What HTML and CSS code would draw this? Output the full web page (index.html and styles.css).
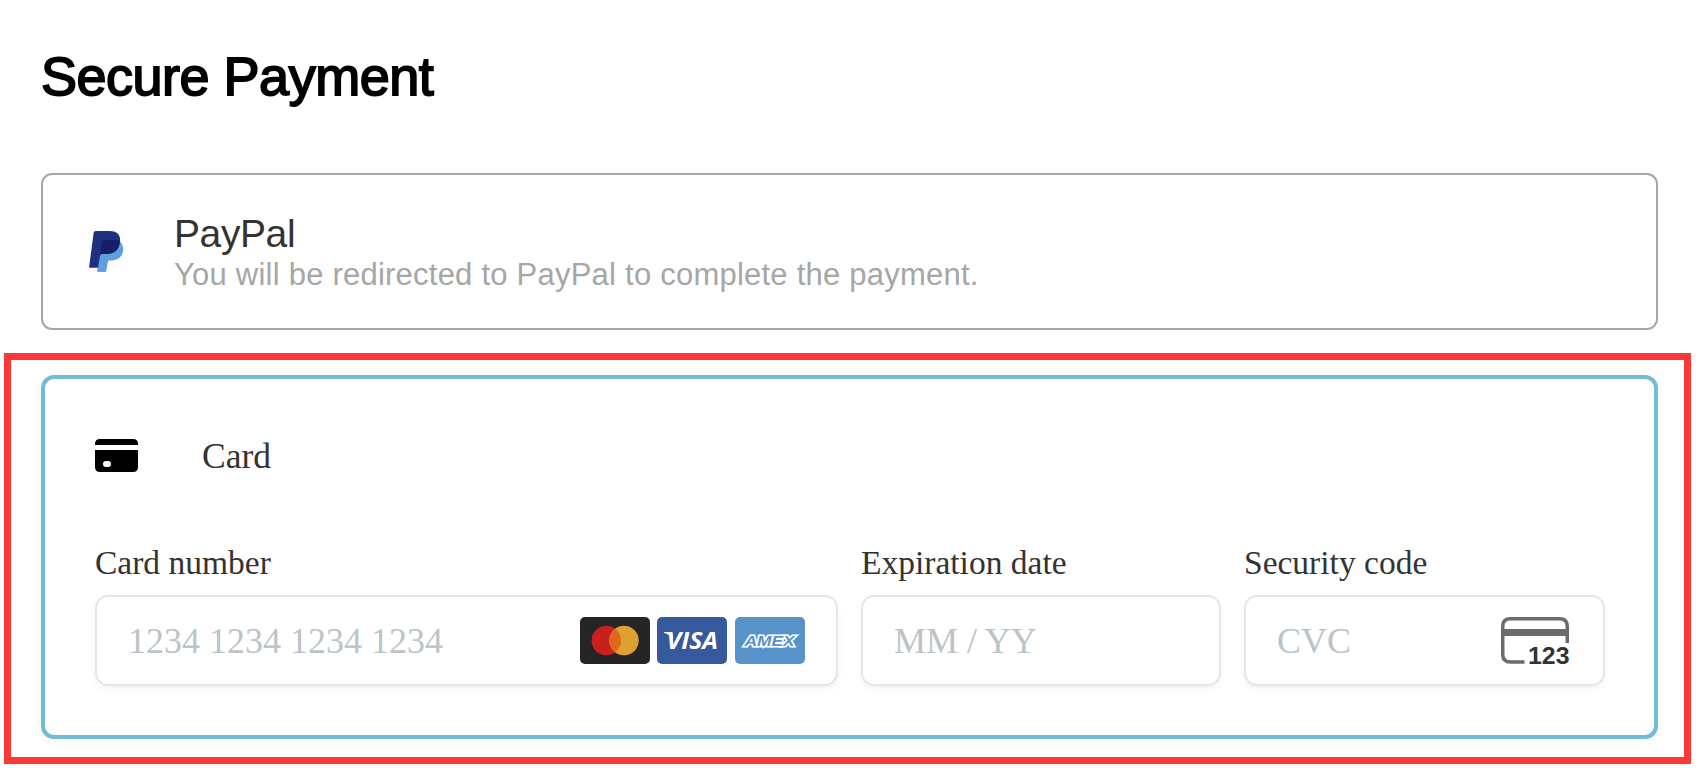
FILE: index.html
```html
<!DOCTYPE html>
<html lang="en">
<head>
  <meta charset="UTF-8">
  <meta name="viewport" content="width=device-width, initial-scale=1.0">
  <title>Secure Payment</title>
  <link rel="stylesheet" href="styles.css">
</head>
<body>
<div class="container">
  <h1>Secure Payment</h1>

  <!-- PayPal option -->
  <div class="paypal">
    <svg class="paypal-logo" width="35" height="42" viewBox="0 0 35 42">
      <path fill="#5f9fdf" d="M12 11H31.500C34 14 35 18 33.500 22C31.800 27 28 29.500 22 29.500H20.500C19.600 29.500 19 30 18.800 31L17.300 40C17.200 40.800 16.800 41 16 41H9Q8 41 8.200 40Z"/>
      <path fill="#203080" d="M6.500 0H20.500C28 0 32 4 31 11C30 19 25 23 17.500 23H13.500C12 23 11.300 23.500 11 25L9 36.800H1Q0 36.800 .2 35.500L4.700 1.500Q5 0 6.500 0Z"/>
      <path fill="#16206a" d="M14.500 9H27Q29.500 9 31 10.200C30 19 25 23 17.500 23H13.500Q11.800 23 11.100 24L13 10.500Q13.200 9 14.500 9Z"/>
    </svg>
    <div class="paypal-info">
      <div class="paypal-name">PayPal</div>
      <div class="paypal-text">You will be redirected to PayPal to complete the payment.</div>
    </div>
  </div>
</div>

<!-- Card option -->
<div class="highlight">
  <form class="card" id="cardForm">
    <div class="card-header">
      <svg width="43" height="33" viewBox="0 0 43 33">
        <path d="M0 6V5Q0 0 5 0H38Q43 0 43 5V6Z"/>
        <path fill-rule="evenodd" d="M0 11H43V28Q43 33 38 33H5Q0 33 0 28ZM11 22Q8 22 8 25Q8 28 11 28H13Q16 28 16 25Q16 22 13 22Z"/>
      </svg>
      <span>Card</span>
    </div>

    <div class="fields">
      <div class="field">
        <label for="cardNumber">Card number</label>
        <div class="input-box">
          <input type="text" id="cardNumber" name="cardNumber" placeholder="1234 1234 1234 1234">
          <div class="brands">
            <svg width="70" height="47" viewBox="0 0 70 47">
              <rect width="70" height="47" rx="5" fill="#252525"/>
              <circle cx="26.300" cy="23.500" r="14.700" fill="#c8201f"/>
              <circle cx="44" cy="23.500" r="14.700" fill="#dfa033"/>
              <path fill="#de681c" d="M35.150 11.750A14.700 14.700 0 0 1 35.150 35.250A14.700 14.700 0 0 1 35.150 11.750Z"/>
            </svg>
            <svg width="70" height="47" viewBox="0 0 70 47">
              <rect width="70" height="47" rx="5" fill="#36589d"/>
              <path fill="#fff" d="M6.500 15.800Q7 15 8 15H13Q15 15 15.500 17L16 22Q13 17.500 6.500 15.800Z"/>
              <text class="visa" x="9.500" y="32" textLength="51.500" lengthAdjust="spacingAndGlyphs">VISA</text>
            </svg>
            <svg width="70" height="47" viewBox="0 0 70 47">
              <rect width="70" height="47" rx="5" fill="#5892cb"/>
              <text class="amex" x="9.500" y="28.800" textLength="50" lengthAdjust="spacingAndGlyphs">AMEX</text>
            </svg>
          </div>
        </div>
      </div>

      <div class="field">
        <label for="expiry">Expiration date</label>
        <div class="input-box">
          <input type="text" id="expiry" name="expiry" placeholder="MM / YY">
        </div>
      </div>

      <div class="field">
        <label for="cvc">Security code</label>
        <div class="input-box cvc-box">
          <input type="text" id="cvc" name="cvc" placeholder="CVC">
          <svg width="72" height="60" viewBox="0 -6 72 60">
            <path fill="none" stroke="#6b6b6b" stroke-width="3.500" d="M23.500 45H9.500Q1.750 45 1.750 37.500V9Q1.750 1.750 9.500 1.750H58.500Q66.250 1.750 66.250 9V26"/>
            <path fill="#6b6b6b" d="M1 12H67V19H1Z"/>
            <text class="cvc-digits" x="27" y="46.800" textLength="41.500" lengthAdjust="spacingAndGlyphs">123</text>
          </svg>
        </div>
      </div>
    </div>
  </form>
</div>
</body>
</html>
```

FILE: styles.css
```css
* {
  box-sizing: border-box;
}
body {
  margin: 0;
  background-color: #fff;
  color: #333;
  font-family: "Liberation Sans", Arial, sans-serif;
}
svg {
  display: block;
  flex: none;
}
.container {
  padding: 45px 42px 0 41px;
}
h1 {
  margin: 0;
  height: 128px;
  color: #000;
  font-size: 54px;
  font-weight: normal;
  line-height: 62px;
  letter-spacing: -0.5px;
  -webkit-text-stroke: 1.8px #000;
}
.paypal {
  display: flex;
  align-items: center;
  height: 157px;
  padding-left: 46px;
  border: 2px solid #a6a6a6;
  border-radius: 11px;
}
.paypal-logo {
  margin-right: 50px;
}
.paypal-info {
  padding-top: 2px;
}
.paypal-name {
  font-size: 39px;
  line-height: 44px;
  letter-spacing: -0.4px;
}
.paypal-text {
  color: #a6a6a6;
  font-size: 31px;
  line-height: 38px;
  letter-spacing: 0.23px;
}
/* Red frame around the card form */
.highlight {
  margin: 23px 9px 0 4px;
  padding: 15px 26px 18px 30px;
  border: 7px solid #fb3737;
}
.card {
  height: 364px;
  padding: 56px 49px 0 50px;
  border: 4px solid #73bcd6;
  border-radius: 13px;
  box-shadow: 0 3px 8px rgba(0, 0, 0, 0.03), 0 0 16px rgba(0, 0, 0, 0.02);
  font-family: "Liberation Serif", "Times New Roman", serif;
}
.card-header {
  display: flex;
  align-items: center;
  gap: 64px;
  height: 40px;
  font-size: 35.500px;
}
.card-header span {
  padding-top: 2px;
}
.fields {
  display: grid;
  grid-template-columns: 743px 360px 361px;
  gap: 23px;
  margin-top: 68px;
}
label {
  display: block;
  height: 52px;
  font-size: 33.500px;
  line-height: 40px;
}
.input-box {
  display: flex;
  align-items: center;
  height: 91px;
  padding: 0 31px;
  border: 2px solid #e6e6e6;
  border-radius: 13px;
  background-color: #fff;
  box-shadow: 0 3px 4px rgba(0, 0, 0, 0.03), 0 5px 15px rgba(0, 0, 0, 0.02);
}
.cvc-box {
  padding-right: 30px;
}
input {
  flex: 1;
  min-width: 0;
  padding: 0;
  border: none;
  outline: none;
  background: none;
  color: #333;
  font-family: inherit;
  font-size: 36px;
}
input::placeholder {
  color: #bcc4c9;
}
.brands {
  display: grid;
  grid-template-columns: 77px 78px 70px;
}
.visa {
  fill: #fff;
  font: italic bold 24px "Open Sans", sans-serif;
}
.amex {
  fill: #5892cb;
  stroke: #fff;
  stroke-width: 3px;
  stroke-linejoin: miter;
  paint-order: stroke;
  font: italic bold 15px "Liberation Sans", Arial, sans-serif;
}
.cvc-digits {
  fill: #333;
  font: bold 24px "Liberation Sans", Arial, sans-serif;
}
```
